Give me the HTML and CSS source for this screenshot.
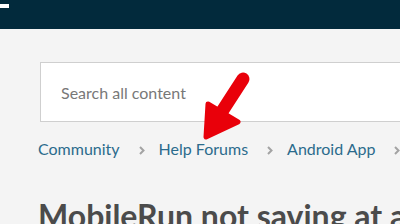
FILE: index.html
```html
<!DOCTYPE html>
<html>
<head>
<meta charset="utf-8">
<link rel="stylesheet" href="styles.css">
</head>
<body>
<header class="topbar"><span class="menu-bar"></span></header>
<main class="content">
  <div class="search">
    <input class="search-input" type="text" placeholder="Search all content">
  </div>
  <nav class="crumbs">
    <a class="crumb">Community</a><svg class="sep" width="6" height="9" viewBox="0 0 6 9"><path d="M1 1 L4.5 4.5 L1 8" fill="none" stroke="#a3a3a3" stroke-width="2"/></svg>
    <a class="crumb">Help Forums</a><svg class="sep" width="6" height="9" viewBox="0 0 6 9"><path d="M1 1 L4.5 4.5 L1 8" fill="none" stroke="#a3a3a3" stroke-width="2"/></svg>
    <a class="crumb">Android App</a><svg class="sep" width="6" height="9" viewBox="0 0 6 9"><path d="M1 1 L4.5 4.5 L1 8" fill="none" stroke="#a3a3a3" stroke-width="2"/></svg>
  </nav>
  <h1 class="title">MobileRun not saving at all</h1>
</main>
<svg class="annot" width="400" height="224" viewBox="0 0 400 224">
  <line x1="243" y1="79" x2="221" y2="113" stroke="#e9000a" stroke-width="13" stroke-linecap="round"/>
  <polygon points="208,104 238,122 206,137" fill="#e9000a" stroke="#e9000a" stroke-width="5" stroke-linejoin="round"/>
</svg>
</body>
</html>
```
FILE: styles.css
```css
html, body {
  margin: 0;
  padding: 0;
  width: 400px;
  height: 224px;
  overflow: hidden;
  background: #f4f4f4;
  font-family: "Lato", "Open Sans", sans-serif;
}
.topbar {
  height: 29px;
  background: #022a3c;
  position: relative;
}
.menu-bar {
  position: absolute;
  left: 0;
  top: 4px;
  width: 9px;
  height: 4px;
  background: #ffffff;
}
.content {
  padding: 33px 0 0 40px;
}
.search {
  width: 380px;
  height: 60px;
  border: 1px solid #cfcfcf;
  border-right: none;
  background: #ffffff;
  box-sizing: border-box;
  display: flex;
  align-items: center;
}
.search-input {
  border: none;
  outline: none;
  background: transparent;
  font-family: "Lato", sans-serif;
  font-size: 16px;
  color: #767676;
  padding: 0 0 0 20px;
  width: 300px;
}
.search-input::placeholder {
  color: #787878;
}
.crumbs {
  margin: 17px 0 0 -2px;
  display: flex;
  align-items: center;
  white-space: nowrap;
  font-size: 16px;
}
.crumb {
  color: #2b6b8c;
}
.sep {
  flex: none;
  margin: 3px 14px 0 19px;
}
.title {
  margin: 39px 0 0 -2px;
  white-space: nowrap;
  font-size: 32px;
  font-weight: 700;
  color: #4b4b4b;
  line-height: 1.2;
}
.annot {
  position: absolute;
  left: 0;
  top: 0;
  pointer-events: none;
}
```
